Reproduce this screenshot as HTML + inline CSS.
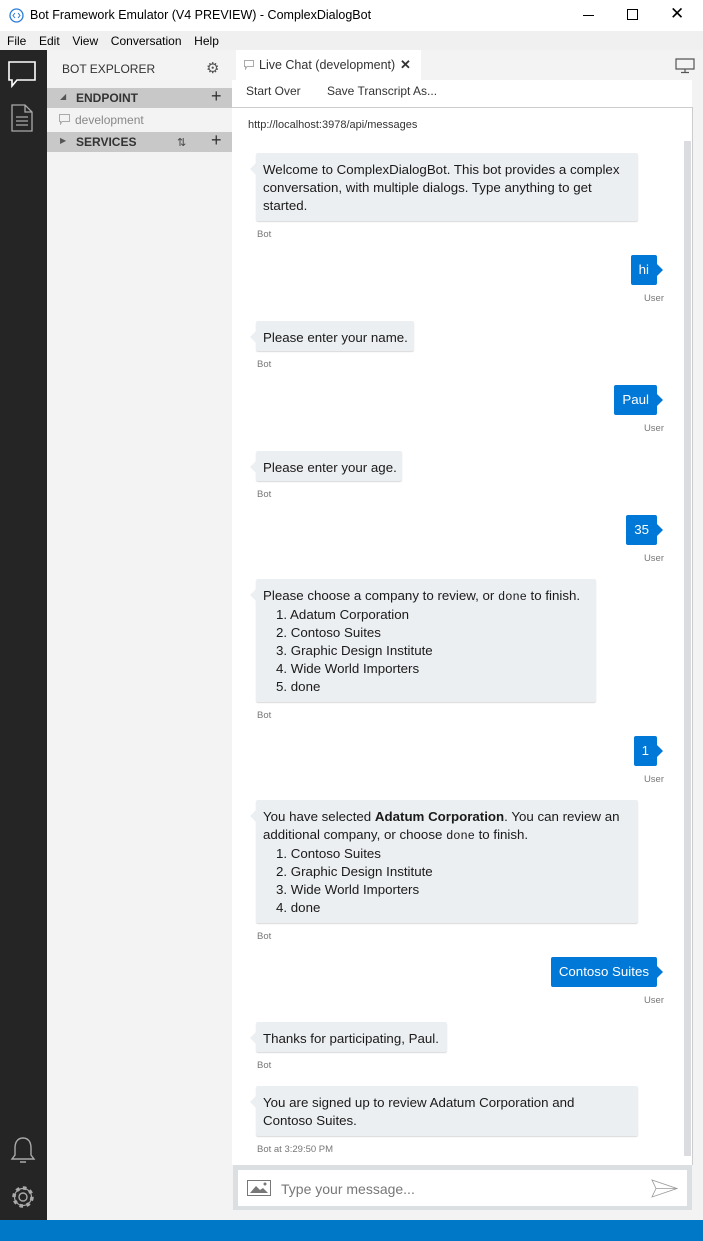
<!DOCTYPE html>
<html><head><meta charset="utf-8"><style>
*{margin:0;padding:0;box-sizing:border-box}
body{width:703px;height:1241px;overflow:hidden;position:relative;font-family:"Liberation Sans",sans-serif;background:#fff;color:#000}
.a{position:absolute;white-space:nowrap}
.bot{position:absolute;left:256px;background:#eceff1;border-radius:2px;box-shadow:0 1px 1px rgba(0,0,0,.15);padding:8px 7px 6px 7px;font-size:13.3px;line-height:18px;color:#1a1a1a}
.nw{white-space:nowrap}
.bot:before{content:"";position:absolute;left:-6px;top:10px;border-style:solid;border-width:6px 6px 6px 0;border-color:transparent #eceff1 transparent transparent}
.usr{position:absolute;right:46px;background:#0078d7;color:#fff;border-radius:2px;height:30px;line-height:30px;padding:0 8px;font-size:13.3px;white-space:nowrap}
.usr:after{content:"";position:absolute;right:-6px;top:9px;border-style:solid;border-width:6px 0 6px 6px;border-color:transparent transparent transparent #0078d7}
.lb{position:absolute;font-size:9.5px;color:#777;white-space:nowrap}
.lbr{right:39px}
.li{padding-left:13px}
code{font-family:"Liberation Mono",monospace;font-size:12px}
</style></head><body>
<div class="a" style="left:0;top:0;width:703px;height:31px;background:#fff"></div>
<svg class="a" style="left:9px;top:8px" width="15" height="15" viewBox="0 0 15 15"><circle cx="7.5" cy="7.5" r="6.5" fill="none" stroke="#2b7bd6" stroke-width="1.3"/><path d="M6 5 L4 7.5 L6 10 M9 5 L11 7.5 L9 10" fill="none" stroke="#2b7bd6" stroke-width="1"/></svg>
<div class="a" style="left:30px;top:8px;font-size:12.5px">Bot Framework Emulator (V4 PREVIEW) - ComplexDialogBot</div>
<div class="a" style="left:583px;top:15px;width:11px;height:1px;background:#000"></div>
<div class="a" style="left:627px;top:9px;width:11px;height:11px;border:1px solid #000"></div>
<div class="a" style="left:670px;top:4px;font-size:17px;font-weight:300">✕</div>
<div class="a" style="left:0;top:31px;width:703px;height:19px;background:#f0f0f0"></div>
<div class="a" style="left:7px;top:34px;font-size:12px;word-spacing:3px">File&nbsp; Edit&nbsp; View&nbsp; Conversation&nbsp; Help</div>
<div class="a" style="left:0;top:50px;width:47px;height:1170px;background:#252526"></div>
<svg class="a" style="left:8px;top:61px" width="28" height="27" viewBox="0 0 28 27"><path d="M1 1 H27 V19 H9 L4 25 V19 H1 Z" fill="none" stroke="#fff" stroke-width="1.6"/></svg>
<svg class="a" style="left:11px;top:104px" width="22" height="28" viewBox="0 0 22 28"><path d="M1 1 H14 L21 8 V27 H1 Z M14 1 V8 H21 M5 13 H17 M5 17 H17 M5 21 H17" fill="none" stroke="#aaa" stroke-width="1.3"/></svg>
<svg class="a" style="left:10px;top:1136px" width="26" height="30" viewBox="0 0 26 30"><path d="M13 2 C7 2 5 7 5 12 V19 L2 23 H24 L21 19 V12 C21 7 19 2 13 2 Z M10 26 H16" fill="none" stroke="#aaa" stroke-width="1.4"/></svg>
<svg class="a" style="left:9px;top:1183px" width="28" height="28" viewBox="0 0 28 28"><circle cx="14" cy="14" r="4" fill="none" stroke="#aaa" stroke-width="1.4"/><circle cx="14" cy="14" r="9" fill="none" stroke="#aaa" stroke-width="3.5" stroke-dasharray="3.5 3.5"/><circle cx="14" cy="14" r="8.5" fill="none" stroke="#aaa" stroke-width="1.2"/></svg>
<div class="a" style="left:47px;top:50px;width:185px;height:1170px;background:#f3f3f3"></div>
<div class="a" style="left:62px;top:62px;font-size:12px;color:#333">BOT EXPLORER</div>
<div class="a" style="left:206px;top:59px;font-size:15px;color:#555">⚙</div>
<div class="a" style="left:47px;top:88px;width:185px;height:20px;background:#c8c8c8"></div>
<div class="a" style="left:60px;top:92px;font-size:8px;color:#555">◢</div>
<div class="a" style="left:76px;top:91px;font-size:12px;font-weight:bold;color:#333">ENDPOINT</div>
<div class="a" style="left:211px;top:86px;font-size:18px;color:#333">+</div>
<svg class="a" style="left:59px;top:114px" width="11" height="11"><path d="M.5 .5 H10.5 V7.5 H3 L1.5 10 V7.5 H.5 Z" fill="none" stroke="#aaa"/></svg>
<div class="a" style="left:75px;top:113px;font-size:12px;color:#888">development</div>
<div class="a" style="left:47px;top:132px;width:185px;height:20px;background:#c8c8c8"></div>
<div class="a" style="left:60px;top:136px;font-size:8px;color:#555">▶</div>
<div class="a" style="left:76px;top:135px;font-size:12px;font-weight:bold;color:#333">SERVICES</div>
<div class="a" style="left:177px;top:136px;font-size:11px;color:#444">⇅</div>
<div class="a" style="left:211px;top:130px;font-size:18px;color:#333">+</div>
<div class="a" style="left:232px;top:50px;width:471px;height:1170px;background:#f3f3f3"></div>
<div class="a" style="left:236px;top:50px;width:185px;height:30px;background:#fff"></div>
<svg class="a" style="left:244px;top:60px" width="10" height="10"><path d="M.5 .5 H9.5 V6.5 H3 L1.5 9 V6.5 H.5 Z" fill="none" stroke="#aaa"/></svg>
<div class="a" style="left:259px;top:58px;font-size:12.5px;color:#333">Live Chat (development)</div>
<div class="a" style="left:400px;top:57px;font-size:13px;font-weight:bold;color:#333">✕</div>
<svg class="a" style="left:675px;top:58px" width="20" height="16"><path d="M1 1 H19 V11 H1 Z M10 11 V14 M6 14.5 H14" fill="none" stroke="#555" stroke-width="1.2"/></svg>
<div class="a" style="left:232px;top:80px;width:460px;height:27px;background:#fff"></div>
<div class="a" style="left:246px;top:84px;font-size:12px;color:#333">Start Over</div>
<div class="a" style="left:327px;top:84px;font-size:12px;color:#333">Save Transcript As...</div>
<div class="a" style="left:232px;top:107px;width:461px;height:1058px;background:#fff;border-top:1px solid #ccc;border-right:1px solid #ccc"></div>
<div class="a" style="left:248px;top:119px;font-size:11px;color:#333">http://localhost:3978/api/messages</div>
<div class="a" style="left:684px;top:141px;width:7px;height:1015px;background:#dadcdf"></div>
<div class="bot" style="top:153px;width:382px">Welcome to ComplexDialogBot. This bot provides a complex conversation, with multiple dialogs. Type anything to get started.</div>
<div class="lb" style="left:257px;top:229px">Bot</div>
<div class="usr" style="top:255px">hi</div><div class="lb lbr" style="top:293px">User</div>
<div class="bot nw" style="top:321px;width:158px;height:30px">Please enter your name.</div>
<div class="lb" style="left:257px;top:359px">Bot</div>
<div class="usr" style="top:385px">Paul</div><div class="lb lbr" style="top:423px">User</div>
<div class="bot nw" style="top:451px;width:146px;height:30px">Please enter your age.</div>
<div class="lb" style="left:257px;top:489px">Bot</div>
<div class="usr" style="top:515px">35</div><div class="lb lbr" style="top:553px">User</div>
<div class="bot nw" style="top:579px;width:340px;height:123px">Please choose a company to review, or <code>done</code> to finish.<div class="li">1. Adatum Corporation<br>2. Contoso Suites<br>3. Graphic Design Institute<br>4. Wide World Importers<br>5. done</div></div>
<div class="lb" style="left:257px;top:710px">Bot</div>
<div class="usr" style="top:736px">1</div><div class="lb lbr" style="top:774px">User</div>
<div class="bot nw" style="top:800px;width:382px;height:123px">You have selected <b>Adatum Corporation</b>. You can review an<br>additional company, or choose <code>done</code> to finish.<div class="li">1. Contoso Suites<br>2. Graphic Design Institute<br>3. Wide World Importers<br>4. done</div></div>
<div class="lb" style="left:257px;top:931px">Bot</div>
<div class="usr" style="top:957px">Contoso Suites</div><div class="lb lbr" style="top:995px">User</div>
<div class="bot nw" style="top:1022px;width:191px;height:30px">Thanks for participating, Paul.</div>
<div class="lb" style="left:257px;top:1060px">Bot</div>
<div class="bot nw" style="top:1086px;width:382px;height:50px">You are signed up to review Adatum Corporation and<br>Contoso Suites.</div>
<div class="lb" style="left:257px;top:1144px">Bot at 3:29:50 PM</div>
<div class="a" style="left:233px;top:1165px;width:459px;height:50px;background:#dcdfe2"></div>
<div class="a" style="left:233px;top:1210px;width:459px;height:10px;background:#f3f3f3"></div>
<div class="a" style="left:238px;top:1170px;width:449px;height:36px;background:#fff"></div>
<svg class="a" style="left:247px;top:1180px" width="24" height="16"><rect x=".5" y=".5" width="23" height="15" fill="none" stroke="#777"/><path d="M3 13 L9 6 L13 10 L16 8 L21 13 Z" fill="#777"/><circle cx="18" cy="4" r="1.5" fill="#777"/></svg>
<div class="a" style="left:281px;top:1181px;font-size:14px;color:#777">Type your message...</div>
<svg class="a" style="left:651px;top:1179px" width="27" height="19"><path d="M1 1 L26 9.5 L1 18 L5 9.5 Z M5 9.5 H26" fill="none" stroke="#999" stroke-width=".8"/></svg>
<div class="a" style="left:0;top:1220px;width:703px;height:21px;background:#0078c8"></div>
</body></html>
